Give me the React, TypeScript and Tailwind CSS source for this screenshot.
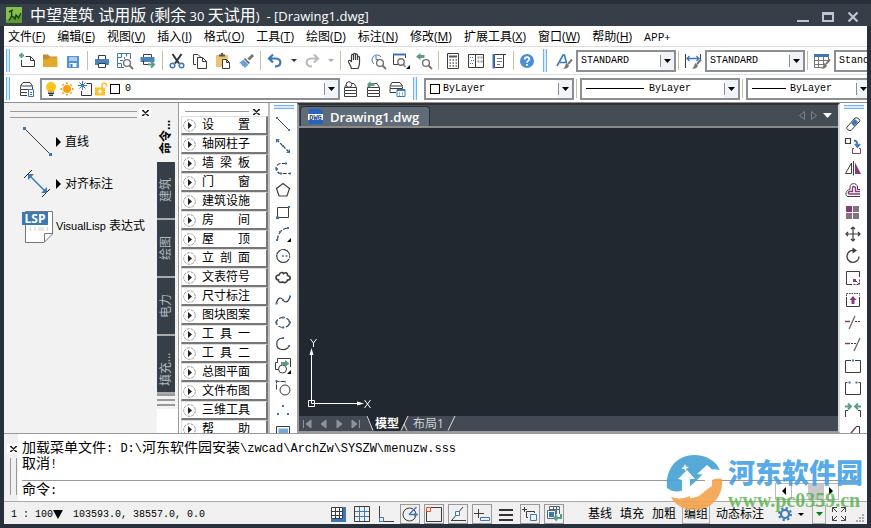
import type { ReactNode } from "react";

const DARK = "#3c3c3c";
const BLUE = "#3c78b4";
const GREEN = "#5a9c86";
const PLUM = "#87397d";

interface Tool {
  label: string;
  art: ReactNode;
}

const magnifier = (
  <g stroke="#77716f" strokeWidth="1.4">
    <circle cx="11" cy="11" r="3.4" fill="#fff" />
    <path d="M13.5 13.5 17 17" strokeWidth="1.8" />
  </g>
);

const brush = (
  <>
    <path d="M17 7.5 13 12" stroke="#777" strokeWidth="2" />
    <path d="M11.5 11 14 13.5C13 16.5 10.5 17 8 16.5 10.5 15.5 10 12.5 11.5 11Z" fill="#777" stroke="none" />
  </>
);

const layers = (
  <>
    <path d="M5 3.5H12L14.5 7.5H2.5Z" />
    <path d="M2.5 8V10.5H14.5V8M2.5 11V13.5H14.5V11M2.5 14V16.5H14.5V14" />
  </>
);

const fileTools: Tool[] = [
  {
    label: "New",
    art: (
      <>
        <path d="M1 3.5H6M3.5 1V6" stroke={GREEN} strokeWidth="2" />
        <path d="M7.5 4.5H12.5L16.5 8.5V14.5H3.5V8M12.5 4.5V8.5H16.5" />
      </>
    ),
  },
  {
    label: "Open",
    art: (
      <>
        <path d="M2 4V2.5H7L9 4.5H16V8H2Z" fill="#c08f33" stroke="none" />
        <path d="M2 15V7H7L9 5.5H16.5V15Z" fill="#e3a92f" stroke="none" />
      </>
    ),
  },
  {
    label: "Save",
    art: (
      <>
        <path d="M3 4H15V16H3Z" fill="#4f93d2" stroke="none" />
        <path d="M5 5H13V9H5Z" fill="#a9cdec" stroke="none" />
        <path d="M5.5 11H12.5V15H5.5Z" fill="#fff" stroke="none" />
        <path d="M6.5 12H8.5V15H6.5Z" fill={BLUE} stroke="none" />
      </>
    ),
  },
];

const printTools: Tool[] = [
  {
    label: "Print",
    art: (
      <>
        <path d="M5.5 7V3.5H12.5V7" />
        <path d="M2 7H16V13H2Z" fill="#4a84bd" stroke="none" />
        <path d="M5.5 11.5H12.5V15.5H5.5Z" fill="#fff" />
      </>
    ),
  },
  {
    label: "Print preview",
    art: (
      <>
        <path d="M1.5 1.5H14.5V7M1.5 1.5V15.5H8M5.5 1.5V5.5H1.5M10.5 1.5V4.5M4 8.5H7M8.5 5V7M1.5 11.5H5.5V15.5" stroke={BLUE} />
        {magnifier}
      </>
    ),
  },
  {
    label: "Plot",
    art: (
      <>
        <path d="M4.5 5V2.5H12.5V5" />
        <path d="M1.5 5H15.5V10H1.5Z" fill="#4a84bd" stroke="none" />
        <path d="M9 12.5H15M12 9.5 15 12.5 12 15.5" stroke={GREEN} strokeWidth="2" />
        <path d="M4.5 8.5V12.5H9" />
      </>
    ),
  },
];

const clipTools: Tool[] = [
  {
    label: "Cut",
    art: (
      <>
        <path d="M4.5 2 11 11.5M13.5 2 7 11.5" stroke="#333" strokeWidth="2" />
        <circle cx="4.5" cy="13.5" r="2.3" stroke={BLUE} strokeWidth="1.5" />
        <circle cx="13.5" cy="13.5" r="2.3" stroke={BLUE} strokeWidth="1.5" />
      </>
    ),
  },
  {
    label: "Copy",
    art: (
      <>
        <path d="M5 12.5H2.5V2.5H7L9.5 5" />
        <path d="M6.5 5.5H11.5L15.5 9.5V16.5H6.5ZM11.5 5.5V9.5H15.5" fill="#fff" />
      </>
    ),
  },
  {
    label: "Paste",
    art: (
      <>
        <path d="M2 3H14V15H2Z" fill="#ecc174" stroke="none" />
        <path d="M5 3.5H11M7 2H9" strokeWidth="2" stroke="#555" />
        <path d="M8.5 7.5H12.5L15.5 10.5V16.5H8.5ZM12.5 7.5V10.5H15.5" fill="#fff" />
      </>
    ),
  },
  {
    label: "Match properties",
    art: (
      <>
        <path d="M16 3 11.5 7.5" stroke="#777" strokeWidth="3" />
        <path d="M8 6 13 11 11.5 12 7 7Z" fill="#666" stroke="none" />
        <path d="M6.5 7.5 11.5 12.5 8 16 6.5 14 5.5 14.5 4 11.5 2 11Z" fill="#6aa3d6" stroke="none" />
      </>
    ),
  },
];

const zoomTools: Tool[] = [
  {
    label: "Pan",
    art: (
      <path
        d="M5.5 16.5C4.5 13 3 12 2.5 9.5 2.5 8 4.5 8 5.5 10V3.5C5.5 2 7.5 2 7.5 3.5V8 2.5C7.5 1 9.5 1 9.5 2.5V8 3C9.5 1.5 11.5 1.5 11.5 3.5V8 5C11.5 4 13.5 4 13.5 5.5V11C13.5 14 12.5 15 12 16.5Z"
        strokeWidth="1.2"
      />
    ),
  },
  {
    label: "Zoom real time",
    art: (
      <>
        <path d="M12 5A5 5 0 1 0 5 12M7 4V7.5H9.5" stroke={BLUE} />
        {magnifier}
      </>
    ),
  },
  {
    label: "Zoom window",
    art: (
      <>
        <path d="M6 12.5H1.5V2.5H13.5V6" />
        <path d="M1 2.5H14" stroke={BLUE} strokeWidth="2" />
        <g stroke="#77716f" strokeWidth="1.4">
          <circle cx="9" cy="10" r="3.2" fill="#fff" />
          <path d="M11.5 12.5 13.5 15" />
        </g>
        <path d="M18 13V17H14Z" fill="#000" stroke="none" />
      </>
    ),
  },
  {
    label: "Zoom previous",
    art: (
      <>
        <path d="M1 4.5 5.5 1V3H9.5V6H5.5V8Z" fill={GREEN} stroke="none" />
        {magnifier}
      </>
    ),
  },
];

const sheetTools: Tool[] = [
  {
    label: "Calculator",
    art: (
      <>
        <path d="M3.5 1.5H14.5V16.5H3.5Z" />
        <path d="M5 4.5H13" stroke="#555" strokeWidth="2" />
        <path d="M5.5 8H13M5.5 11H13M5.5 14H13" stroke="#666" strokeWidth="1.5" strokeDasharray="1.5 1.5" />
      </>
    ),
  },
  {
    label: "Design center",
    art: (
      <>
        <path d="M1.5 2.5H8.5V15.5H1.5ZM8.5 2.5H16.5V15.5H8.5Z" />
        <path d="M3 5.5H7M4 8.5H7M3 11.5H7" stroke={BLUE} strokeDasharray="1 1" />
        <path d="M10.5 5.5H12.5M13.5 5.5H15.5M10.5 9.5H12.5M13.5 9.5H15.5" stroke="#999" strokeWidth="2" />
      </>
    ),
  },
  {
    label: "Properties",
    art: (
      <>
        <path d="M4.5 2.5H16M13.5 3V15.5H4.5V2.5" />
        <path d="M3.5 2V16.5" stroke={BLUE} strokeWidth="2" />
        <path d="M7 6.5H12M7 9.5H12M7 12.5H10" stroke="#777" />
      </>
    ),
  },
];

const drawTools: Tool[] = [
  {
    label: "Line",
    art: (
      <>
        <path d="M3 3 15 15" />
        <path d="M2 2H4V4H2ZM14 14H16V16H14Z" fill={BLUE} stroke="none" />
      </>
    ),
  },
  {
    label: "Construction line",
    art: (
      <>
        <path d="M3 3 15 15" strokeDasharray="3 1.5" strokeWidth="1.2" />
        <path d="M2 2H6L2 6ZM16 16V12L12 16ZM8 8H10V10H8Z" fill={BLUE} stroke="none" />
      </>
    ),
  },
  {
    label: "Polyline",
    art: (
      <>
        <path d="M12 4.5H7A5 5 0 0 0 7 14.5H16" strokeDasharray="4 1.5" strokeWidth="1.2" />
        <path d="M11 3.5H13V5.5H11ZM2 9H4V11H2ZM15 13.5H17V15.5H15ZM6 13.5H8V15.5H6Z" fill={BLUE} stroke="none" />
      </>
    ),
  },
  { label: "Polygon", art: <path d="M9 2.5 15.5 7.5 13 15H5L2.5 7.5Z" strokeWidth="1.2" /> },
  {
    label: "Rectangle",
    art: (
      <>
        <path d="M3.5 4.5H14.5V14.5H3.5Z" />
        <path d="M2 13.5H5V16H2ZM14 3H16V5H14Z" fill={BLUE} stroke="none" />
      </>
    ),
  },
  {
    label: "Arc",
    art: (
      <>
        <path d="M14 3C7 4 4 8 3.5 15" strokeDasharray="5 1.5" strokeWidth="1.2" />
        <path d="M13 2H15V4H13ZM5 6H7V8H5ZM2 14H4V16H2Z" fill={BLUE} stroke="none" />
        <path d="M17 13V17H13Z" fill="#000" stroke="none" />
      </>
    ),
  },
  {
    label: "Circle",
    art: (
      <>
        <path d="M15 6A6.5 6.5 0 1 0 15 12" strokeWidth="1.2" />
        <path d="M15 6Q16.5 9 15 12" strokeDasharray="2 1" />
        <path d="M8 9H16" stroke={BLUE} strokeWidth="1.5" strokeDasharray="2 1.5" />
      </>
    ),
  },
  {
    label: "Revision cloud",
    art: (
      <path
        d="M5 6C6 3 9 3 9.5 4.5 12 3 14 4 13.5 6.5 17 7 17 11 13.5 11 13 14 10 14 8.5 13 6 14 4 13 4.5 11 1 10.5 1 6.5 5 6Z"
        strokeWidth="1.6"
      />
    ),
  },
  {
    label: "Spline",
    art: (
      <>
        <path d="M2.5 12C4 6 7 6 9 9S14 12 16 6" strokeWidth="1.2" />
        <path d="M1.5 11.5H3.5V13.5H1.5ZM8 8H10V10H8ZM15 4.5H17V6.5H15Z" fill={BLUE} stroke="none" />
      </>
    ),
  },
  {
    label: "Ellipse",
    art: (
      <>
        <ellipse cx="9" cy="9.5" rx="6.5" ry="5" strokeDasharray="6 1.5" strokeWidth="1.2" />
        <path d="M8 3.5H10V5.5H8ZM8 13.5H10V15.5H8ZM1 8.5H3V10.5H1ZM15 8.5H17V10.5H15Z" fill={BLUE} stroke="none" />
      </>
    ),
  },
  {
    label: "Elliptical arc",
    art: (
      <>
        <path d="M8 3C1 4 1 14 8 14.5 12 15 14 13 15 11" strokeWidth="1.2" />
        <path d="M8 2H10V4H8ZM14 10H16V12H14Z" fill={BLUE} stroke="none" />
      </>
    ),
  },
  {
    label: "Insert block",
    art: (
      <>
        <path d="M5 12.5H1.5V5.5H3.5V1.5H16.5V10" />
        <circle cx="8.5" cy="12" r="4" fill="#fff" />
        <path d="M7 5H11V3L15.5 6.5 11 10V8H7Z" fill={GREEN} stroke="none" />
        <path d="M17 13V17H13Z" fill="#000" stroke="none" />
      </>
    ),
  },
  {
    label: "Make block",
    art: (
      <>
        <path d="M2.5 10.5V2.5H11.5V4" strokeDasharray="5 1" />
        <path d="M1.5 1H3.5V3H1.5Z" fill={BLUE} stroke="none" />
        <circle cx="11" cy="11" r="5" fill="#fff" />
      </>
    ),
  },
  {
    label: "Point",
    art: <path d="M8 4H10V6H8ZM3 12H5V14H3ZM13 12H15V14H13Z" fill={BLUE} stroke="none" />,
  },
  {
    label: "Hatch",
    art: (
      <>
        <path d="M2.5 3.5H15.5V17H2.5Z" />
        <path d="M4.5 5.5H14V17H4.5Z" fill="#74a8da" stroke="none" />
      </>
    ),
  },
];

const modifyTools: Tool[] = [
  {
    label: "Erase",
    art: (
      <>
        <path d="M3 12 11 3Q13 2 15 4T15 7L7 15.5Q5 16 3.5 14.5T3 12Z" fill="#fff" />
        <path d="M7 8 11 4 14 7 10 11.5Z" fill={BLUE} stroke="none" />
      </>
    ),
  },
  {
    label: "Copy object",
    art: (
      <>
        <path d="M1.5 1.5H6.5V6.5H1.5Z" strokeWidth="1.2" />
        <path d="M10 3.5C12 3.5 13.5 5 13.5 9M11 7 13.5 10 16 7" stroke={BLUE} strokeWidth="1.8" />
        <path d="M10 11.5H8.5V16.5H16.5V11.5H15" stroke={PLUM} />
      </>
    ),
  },
  {
    label: "Mirror",
    art: (
      <>
        <path d="M7.5 4V14.5H1.5ZM9.5 2V16.5" />
        <path d="M11 3.5V15H17Z" fill={PLUM} stroke="none" />
      </>
    ),
  },
  {
    label: "Offset",
    art: (
      <>
        <path d="M16 8.5H13.5V6C13 1.5 6 1.5 6 6V8.5C1 9 1 15.5 4 15.5H16" />
        <path d="M16 10.5H11.5V7C11 5 8.5 5 8.5 7V10.5H5.5C4 11 4 13 5.5 13H16" stroke={PLUM} strokeWidth="1.4" />
      </>
    ),
  },
  {
    label: "Array",
    art: (
      <>
        <path d="M2 3H8V9H2Z" fill={PLUM} stroke="none" />
        <path d="M9 3H15V9H9ZM2 10H8V16H2ZM9 10H15V16H9Z" fill="#84707f" stroke="none" />
      </>
    ),
  },
  {
    label: "Move",
    art: <path d="M9 2V16M2 9H16M7 4 9 2 11 4M7 14 9 16 11 14M4 7 2 9 4 11M14 7 16 9 14 11" strokeWidth="1.2" />,
  },
  {
    label: "Rotate",
    art: (
      <>
        <path d="M10 3.5A6 6 0 1 0 15 9.5" strokeWidth="1.3" />
        <path d="M8.5 0.5 13 3.5 8.5 6.5Z" fill={DARK} stroke="none" />
      </>
    ),
  },
  {
    label: "Scale",
    art: (
      <>
        <path d="M15.5 8V2.5H2.5V15.5H8" />
        <path d="M9 10H12V13H9Z" fill={PLUM} stroke="none" />
        <path d="M9.5 15.5H15.5V10M12 12 15 15" strokeDasharray="2 1" />
      </>
    ),
  },
  {
    label: "Stretch",
    art: (
      <>
        <path d="M2.5 6V15.5H15.5V6" />
        <path d="M2.5 5V2.5H15.5V5" strokeDasharray="1.5 1" />
        <path d="M9 5 12.5 9H10.5V13H7.5V9H5.5Z" fill={PLUM} stroke="none" />
      </>
    ),
  },
  {
    label: "Trim",
    art: (
      <>
        <path d="M11 3 5 16" stroke="#666" strokeWidth="1.3" />
        <path d="M1 8.5H6" stroke={PLUM} strokeWidth="1.5" />
        <path d="M11 8.5H17" strokeDasharray="2 1" />
      </>
    ),
  },
  {
    label: "Extend",
    art: (
      <>
        <path d="M16 3 10 16" stroke="#666" strokeWidth="1.3" />
        <path d="M1 8.5H6" stroke={PLUM} strokeWidth="1.5" />
        <path d="M7 8.5H12" strokeDasharray="2 1" />
      </>
    ),
  },
  {
    label: "Break at point",
    art: (
      <>
        <path d="M7 3.5H1.5V15.5H16.5V3.5H11" />
        <path d="M8 2.5H10V4.5H8Z" fill={BLUE} stroke="none" />
      </>
    ),
  },
  {
    label: "Break",
    art: (
      <>
        <path d="M3.5 3.5H1.5V15.5H16.5V3.5H14.5" />
        <path d="M4.5 2.5H6.5V4.5H4.5ZM11.5 2.5H13.5V4.5H11.5Z" fill={BLUE} stroke="none" />
      </>
    ),
  },
  {
    label: "Join",
    art: (
      <>
        <path d="M1 5.5H6M4 2.5 7 5.5 4 8.5M17 5.5H12M14 2.5 11 5.5 14 8.5" stroke={GREEN} strokeWidth="1.8" />
        <path d="M1.5 16V9.5H4M16.5 16V9.5H14" />
      </>
    ),
  },
  {
    label: "Chamfer",
    art: (
      <>
        <path d="M3 15 12 4" stroke={PLUM} strokeWidth="1.5" />
        <path d="M12 3.5H15.5V17" />
      </>
    ),
  },
];

const statusToggles: (Tool & { on?: boolean })[] = [
  {
    label: "Snap",
    art: (
      <>
        <path d="M15.5 2V15.5H2" stroke={BLUE} strokeWidth="3" />
        <path d="M2.5 2.5H13.5V13.5H2.5ZM6.5 2V14M10.5 2V14M2 6.5H14M2 10.5H14" fill="#fff" />
      </>
    ),
  },
  {
    label: "Grid",
    art: (
      <>
        <path d="M6.5 2V16M11.5 2V16M2 6.5H16M2 11.5H16" stroke={BLUE} />
        <path d="M1.5 1.5H16.5V16.5H1.5Z" />
      </>
    ),
  },
  {
    label: "Ortho",
    art: (
      <>
        <path d="M2.5 1V16.5H17" />
        <path d="M2.5 12.5H6.5V16.5H2.5Z" stroke={BLUE} />
      </>
    ),
  },
  {
    label: "Polar",
    on: true,
    art: (
      <>
        <circle cx="8.5" cy="9.5" r="6.5" />
        <path d="M8 9.5H17M8 9.5 15.5 2M14 8V12" stroke={BLUE} strokeWidth="1.3" />
      </>
    ),
  },
  {
    label: "Object snap",
    on: true,
    art: (
      <>
        <path d="M6 2.5H16.5V16.5H1.5V6" />
        <path d="M1.5 2.5H5.5V6.5H1.5Z" stroke="#d9532c" />
      </>
    ),
  },
  {
    label: "Object tracking",
    on: true,
    art: (
      <>
        <path d="M2 15.5H17M3 15 14 2" />
        <path d="M6.5 6.5H10.5V10.5H6.5Z" stroke={BLUE} fill="#fff" />
      </>
    ),
  },
  {
    label: "Dynamic input",
    on: true,
    art: (
      <>
        <path d="M1 8.5H11M5.5 4V13" />
        <path d="M7.5 12.5H16.5V15.5H7.5Z" stroke={BLUE} />
      </>
    ),
  },
  { label: "Line weight", art: <path d="M2 5H16M2 10H16M2 15H16" strokeWidth="2" stroke="#333" /> },
  {
    label: "Cycle selection",
    on: true,
    art: (
      <>
        <path d="M1 4.5H6M3.5 2V7M7 12.5H5.5V6.5H13.5V8" />
        <path d="M9.5 9.5H15.5V15.5H9.5Z" stroke={BLUE} />
      </>
    ),
  },
  {
    label: "Quick properties",
    on: true,
    art: (
      <>
        <path d="M4.5 5V1.5H14.5V9M4.5 4.5H14M8.5 2V5M11.5 2V9M2.5 5.5H10.5V13.5H2.5Z" stroke="#567" />
        <path d="M4 7H9V12H4Z" fill={BLUE} stroke="none" />
        <path d="M16 9V13H10M12 10.5 9.5 13 12 15.5" stroke={GREEN} strokeWidth="2" />
      </>
    ),
  },
];

const menus: [string, string][] = [
  ["文件", "F"],
  ["编辑", "E"],
  ["视图", "V"],
  ["插入", "I"],
  ["格式", "O"],
  ["工具", "T"],
  ["绘图", "D"],
  ["标注", "N"],
  ["修改", "M"],
  ["扩展工具", "X"],
  ["窗口", "W"],
  ["帮助", "H"],
];

// Short names are spread over a four-character column.
const archMenu: string[][] = [
  ["设", "置"],
  ["轴网柱子"],
  ["墙", "梁", "板"],
  ["门", "窗"],
  ["建筑设施"],
  ["房", "间"],
  ["屋", "顶"],
  ["立", "剖", "面"],
  ["文表符号"],
  ["尺寸标注"],
  ["图块图案"],
  ["工", "具", "一"],
  ["工", "具", "二"],
  ["总图平面"],
  ["文件布图"],
  ["三维工具"],
  ["帮", "助"],
];

function Glyph({ children }: { children: ReactNode }) {
  return (
    <svg viewBox="0 0 18 18" className="size-[18px] shrink-0" fill="none" stroke={DARK} aria-hidden="true">
      {children}
    </svg>
  );
}

function ToolButton({ label, art }: Tool) {
  return (
    <button type="button" aria-label={label} className="flex h-[22px] w-[23px] shrink-0 items-center justify-center pr-px">
      <Glyph>{art}</Glyph>
    </button>
  );
}

function Tools({ items }: { items: Tool[] }) {
  return items.map((tool) => <ToolButton key={tool.label} {...tool} />);
}

function Divider() {
  return <span className="mr-[3px] ml-0.5 h-[19px] w-px shrink-0 bg-[#c5c1a8]" />;
}

function Grip() {
  return <span className="mr-1.5 ml-0.5 h-[23px] w-1 shrink-0 border-x border-[#6db3f8] bg-[#d7ebfd]" />;
}

function DropArrow({ label, color }: { label: string; color: string }) {
  return (
    <button type="button" aria-label={label} className="grid h-[22px] w-3.5 shrink-0 place-items-center">
      <svg viewBox="0 0 6 3" className="h-[3px] w-1.5" fill={color}>
        <path d="M0 0H6L3 3Z" />
      </svg>
    </button>
  );
}

interface ComboProps {
  label: string;
  value: string;
  width: string;
  pad?: string;
  children?: ReactNode;
}

function Combo({ label, value, width, pad = "pl-[3px]", children }: ComboProps) {
  return (
    <div className={`relative h-[22px] shrink-0 ${width}`}>
      <select
        aria-label={label}
        defaultValue={value}
        className={`block size-full appearance-none border-2 border-[#8b8f93] bg-white font-['Liberation_Mono',monospace] text-[10px] text-black outline-none ${pad}`}
      >
        <option>{value}</option>
      </select>
      <span className="pointer-events-none absolute inset-y-0 left-1.5 flex items-center gap-0.5">{children}</span>
      <span className="pointer-events-none absolute inset-y-0.5 right-0.5 grid w-3.5 place-items-center bg-[#f0f4f9]">
        <svg viewBox="0 0 7 4" className="h-1 w-[7px]">
          <path d="M0 0H7L3.5 4Z" />
        </svg>
        <span className="absolute top-[3px] left-0 h-3 w-px bg-[#8b8f93]" />
      </span>
    </div>
  );
}

function CloseMark({ label }: { label: string }) {
  return (
    <button type="button" aria-label={label} className="grid h-2.5 w-3 place-items-center bg-white">
      <svg viewBox="0 0 7 6" className="h-1.5 w-[7px]" stroke="#222" strokeWidth="1.5">
        <path d="M1 .5 6 5.5M6 .5 1 5.5M0 .5H2M5 .5H7M0 5.5H2M5 5.5H7" />
      </svg>
    </button>
  );
}

function TitleBar() {
  return (
    <header className="flex h-[26px] shrink-0 items-center justify-between border-t-4 border-[#27303a] bg-[#363e47] pr-3 pl-1.5 text-white">
      <div className="flex items-center gap-2">
        <svg viewBox="0 0 16 16" className="size-4" aria-hidden="true">
          <path d="M0 0H16V16H0Z" fill="#5c9c2f" />
          <path d="M0 0H16V8Q6 8 0 14Z" fill="#86c04c" />
          <path d="M3 13.5Q6.5 9 5.5 4.5M3 5 7 3M6 9 9 12 10 8 12.5 11 15 6" fill="none" stroke="#173d14" strokeWidth="1.4" />
        </svg>
        <h1 className="flex items-baseline font-['Open_Sans','Noto_Sans_CJK_SC',sans-serif] text-[13px] leading-[22px] whitespace-pre">
          <span className="text-base leading-[22px]">中望建筑 试用版 </span>
          <span>(</span>
          <span className="text-base leading-[22px]">剩余</span>
          <span> 30 </span>
          <span className="text-base leading-[22px]">天试用</span>
          <span>)  - [Drawing1.dwg]</span>
        </h1>
      </div>
      <div className="mt-1 flex gap-[13px]">
        <button type="button" aria-label="Minimize" className="flex h-3.5 w-3 items-end">
          <span className="mb-0.5 h-0.5 w-full bg-[#b9c8d4]" />
        </button>
        <button type="button" aria-label="Maximize" className="grid h-3.5 w-3 place-items-center">
          <span className="h-2.5 w-full border-2 border-t-[3px] border-[#b9c8d4]" />
        </button>
        <button type="button" aria-label="Close" className="grid h-3.5 w-3 place-items-center">
          <svg viewBox="0 0 10 10" className="size-2.5" stroke="#b9c8d4" strokeWidth="2.2">
            <path d="M.5.5 9.5 9.5M9.5.5.5 9.5" />
          </svg>
        </button>
      </div>
    </header>
  );
}

function MenuBar() {
  return (
    <nav className="flex h-[21px] shrink-0 items-center gap-3 overflow-hidden border-b border-[#dcdcdc] bg-white pt-0.5 pl-1 font-['Open_Sans','Noto_Sans_CJK_SC',sans-serif] text-xs whitespace-nowrap text-black">
      {menus.map(([name, key]) => (
        <button type="button" key={name} className="leading-[18px]">
          {name}(<u>{key}</u>)
        </button>
      ))}
      <button type="button" className="text-[11px] leading-[18px]">
        APP+
      </button>
    </nav>
  );
}

function MainToolbar() {
  return (
    <div className="flex h-7 shrink-0 items-center overflow-hidden border-b border-[#dcdcdc] bg-white">
      <Grip />
      <Tools items={fileTools} />
      <Divider />
      <Tools items={printTools} />
      <Divider />
      <Tools items={clipTools} />
      <Divider />
      <ToolButton
        label="Undo"
        art={<path d="M7 2.5 3 6.5 7 10.5M3.5 6.5H10C16 6.5 16 14.5 9 14.5" stroke={BLUE} strokeWidth="2.2" />}
      />
      <DropArrow label="Undo list" color="#333" />
      <ToolButton
        label="Redo"
        art={<path d="M11 2.5 15 6.5 11 10.5M14.5 6.5H8C2 6.5 2 14.5 9 14.5" stroke="#bcbcbc" strokeWidth="2.2" />}
      />
      <DropArrow label="Redo list" color="#aaa" />
      <Divider />
      <Tools items={zoomTools} />
      <Divider />
      <Tools items={sheetTools} />
      <Divider />
      <ToolButton
        label="Help"
        art={
          <>
            <circle cx="8" cy="9" r="7" fill="#4a8fd0" stroke="none" />
            <path d="M5.8 7.5C5.8 4.5 10.5 4.5 10.3 7.2 10.2 9 8 8.8 8 10.8M8 12V13.8" stroke="#fff" strokeWidth="1.8" />
          </>
        }
      />
      <span className="w-px shrink-0" />
      <Grip />
      <ToolButton
        label="Text style"
        art={
          <>
            <path d="M2 14 8 3H9.5L11.5 11M5 10.5H11" stroke={BLUE} strokeWidth="1.6" />
            {brush}
          </>
        }
      />
      <Combo label="Text style" value="STANDARD" width="w-[100px]" />
      <Divider />
      <ToolButton
        label="Dimension style"
        art={
          <>
            <path d="M1.5 2V16M16.5 2V8" />
            <path d="M3 6.5H15M5.5 4 3 6.5 5.5 9M12.5 4 15 6.5 12.5 9" stroke={BLUE} strokeWidth="1.3" />
            {brush}
          </>
        }
      />
      <Combo label="Dimension style" value="STANDARD" width="w-[100px]" />
      <Divider />
      <ToolButton
        label="Table style"
        art={
          <>
            <path d="M1.5 5V15.5H9M1.5 8.5H15M1.5 12.5H11M5.5 5V15.5M10.5 5V12M15.5 5V8" stroke="#777" />
            <path d="M1 3.5H16" stroke={BLUE} strokeWidth="3" />
            {brush}
          </>
        }
      />
      <Combo label="Table style" value="Standard" width="w-[100px]" />
    </div>
  );
}

function LayerToolbar() {
  return (
    <div className="flex h-7 shrink-0 items-center overflow-hidden border-b border-[#8f8f8f] bg-white">
      <Grip />
      <ToolButton
        label="Layer manager"
        art={
          <>
            <path d="M5 2.5H12L14.5 6H2.5ZM2.5 6.5V9.5H14.5V6.5M2.5 10V12.5H9M2.5 13V15.5H9" />
            <path d="M10.5 9.5H15.5V16.5H10.5Z" stroke={BLUE} fill="#fff" />
            <path d="M12 12.5H14M12 14.5H14" stroke={BLUE} />
          </>
        }
      />
      <span className="w-px shrink-0" />
      <Combo label="Layer" value="0" width="w-[300px]" pad="pl-[83px]">
        <svg viewBox="0 0 10 14" className="h-3.5 w-2.5">
          <circle cx="5" cy="5" r="5" fill="#fcc419" />
          <path d="M2 8H8V10H2Z" fill="#e9b422" />
          <path d="M2 10.5H8V12H2ZM3 12.5H7V14H3Z" fill="#333" />
        </svg>
        <svg viewBox="0 0 18 18" className="size-[18px]">
          <circle cx="9" cy="9" r="4" fill="#ff9e0d" />
          <g stroke="#ff9e0d" strokeWidth="2">
            <path d="M9 2.500V4M9 14V15.5M2.5 9H4M14 9H15.5M4.500 4.500 5.500 5.500M12.500 12.500 13.500 13.500M4.500 13.500 5.500 12.500M12.500 5.500 13.500 4.500" />
          </g>
        </svg>
        <svg viewBox="0 0 15 16" className="h-4 w-[15px]" fill="none">
          <path d="M8.5 2.5H13.5V14.5H3.5V10" stroke="#333" />
          <path d="M4.5 0V9M0 4.5H9M1.5 1.5 7.5 7.5M7.5 1.5 1.5 7.5" stroke={BLUE} />
        </svg>
        <svg viewBox="0 0 13 14" className="h-3.5 w-[13px]" fill="none">
          <path d="M7 6V3C7 .5 11.5.5 11.5 3V4.5" stroke="#fbc02d" strokeWidth="1.5" />
          <path d="M0 5.5H10V13.5H0Z" fill="#fbc02d" />
          <path d="M5 7.5V11.5M3 9.5H7" stroke="#fff" strokeWidth="1.5" />
        </svg>
        <span className="size-2.5 border border-black bg-white" />
      </Combo>
      <ToolButton
        label="Make object layer current"
        art={
          <>
            {layers}
            <circle cx="7" cy="4.5" r="2.8" fill="#fff" />
          </>
        }
      />
      <ToolButton
        label="Layer previous"
        art={
          <>
            {layers}
            <path d="M2 4.5 5.5 1V3H9.5V6H5.5V8Z" fill={GREEN} stroke="none" />
          </>
        }
      />
      <ToolButton
        label="Layer state"
        art={
          <>
            <path d="M4 2.5H12L14.5 6H2ZM2 6.5V8.5H14.5V6.5M2 9V12.5H8" />
            <path d="M9 9.5H17V16.5H9Z" stroke={BLUE} fill="#fff" />
            <path d="M9 10.5H17M11 13H12M14 13H15M11 15H12M14 15H15" stroke={BLUE} />
          </>
        }
      />
      <span className="w-0.5 shrink-0" />
      <Grip />
      <span className="w-px shrink-0" />
      <Combo label="Color" value="ByLayer" width="w-[150px]" pad="pl-[17px]">
        <span className="size-2.5 border border-black" />
      </Combo>
      <Divider />
      <Combo label="Linetype" value="ByLayer" width="w-[160px]" pad="pl-[67px]">
        <span className="h-px w-[58px] bg-black" />
      </Combo>
      <Divider />
      <Combo label="Lineweight" value="ByLayer" width="w-[126px]" pad="pl-[42px]">
        <span className="h-px w-[34px] bg-black" />
      </Combo>
    </div>
  );
}

interface PaletteRowProps {
  latin?: string;
  text: string;
  arrow?: boolean;
  children: ReactNode;
}

function PaletteRow({ latin, text, arrow, children }: PaletteRowProps) {
  return (
    <button type="button" className="flex h-[42px] items-center whitespace-nowrap">
      <svg viewBox="0 0 34 34" className="size-[34px]" fill="none" stroke={DARK} aria-hidden="true">
        {children}
      </svg>
      {arrow && (
        <svg viewBox="0 0 5 10" className="mr-1 h-2.5 w-[5px]">
          <path d="M0 0 5 5 0 10Z" />
        </svg>
      )}
      <span className="flex items-baseline gap-[3px]">
        {latin && <span className="font-['Liberation_Sans',sans-serif] text-[11px]">{latin}</span>}
        {text}
      </span>
    </button>
  );
}

function ToolPalette() {
  return (
    <section className="flex w-[175px] shrink-0 overflow-hidden border-r border-[#999] bg-[#f2f2f2] font-['Open_Sans','Noto_Sans_CJK_SC',sans-serif] text-xs text-black">
      <div className="min-w-0 flex-1">
        <div className="mt-1 flex items-center justify-between pr-1.5 pl-1.5">
          <span className="mt-1 h-[7px] w-[127px] border-y border-[#999]" />
          <CloseMark label="Close palette" />
        </div>
        <div className="mt-[3px] flex flex-col pl-[18px]">
          <PaletteRow text="直线" arrow>
            <path d="M3 4 29 30" />
            <path d="M1 2H4V5H1ZM27 28H30V31H27Z" fill={BLUE} stroke="none" />
          </PaletteRow>
          <PaletteRow text="对齐标注" arrow>
            <path d="M2 11 10 3M20 30 28 22" stroke="#222" />
            <path d="M8 9 23 24" stroke={BLUE} strokeWidth="1.5" />
            <path d="M6 7H12L6 13ZM25 26V20L19 26Z" fill={BLUE} stroke="none" />
          </PaletteRow>
          <PaletteRow latin="VisualLisp" text="表达式">
            <path d="M3.5 2.5H30.5V25L22 33.5H3.5Z" fill="#fff" stroke="#777" />
            <path d="M30 24.5H22.5V33" stroke="#777" />
            <path d="M0 3H26V16H0Z" fill={BLUE} stroke="none" />
            <text x="13" y="14" textAnchor="middle" fill="#fff" stroke="none" fontSize="12" fontWeight="700" fontFamily="Open Sans">
              LSP
            </text>
            <path d="M9 18Q7 20 9 22M25 18Q27 20 25 22M12 19H14M12 21H14M16 19H22M16 21H22" stroke="#ccc" />
          </PaletteRow>
        </div>
      </div>
      <div className="flex w-[21px] flex-col">
        <button
          type="button"
          className="flex h-[59px] w-[18px] rotate-180 items-center justify-start pt-2 leading-[18px] font-bold [text-orientation:sideways] [writing-mode:vertical-rl]"
        >
          命令...
        </button>
        {["建筑", "绘图", "电力", "填充..."].map((tab) => (
          <button
            type="button"
            key={tab}
            className="flex h-[58px] w-[18px] rotate-180 items-center justify-start border-t-2 border-[#aaa] bg-[#363e47] pt-4 leading-[18px] whitespace-nowrap text-[#b5babf] [text-orientation:sideways] [writing-mode:vertical-rl] last-of-type:pt-1.5"
          >
            {tab}
          </button>
        ))}
        <span className="h-[15px] w-[18px] bg-[repeating-linear-gradient(#999_0_2px,#f2f2f2_2px_5px)]" />
        <span className="w-full flex-1 bg-white" />
      </div>
    </section>
  );
}

function ArchMenu() {
  return (
    <section className="flex w-[91px] shrink-0 flex-col overflow-hidden border-r-2 border-[#bdbdbd] bg-white pl-0.5 font-['Open_Sans','Noto_Sans_CJK_SC',sans-serif] text-xs text-black">
      <div className="flex h-[13px] shrink-0 items-center justify-between pt-1 pr-1.5 pl-1">
        <span className="h-px w-16 bg-[#999]" />
        <CloseMark label="Close menu" />
      </div>
      {archMenu.map((parts) => (
        <button
          type="button"
          key={parts.join("")}
          className="flex h-[19px] shrink-0 items-center gap-1.5 border border-r-2 border-b-2 border-[#dedede] border-r-[#777] border-b-[#777] pl-px"
        >
          <svg viewBox="0 0 13 13" className="size-[13px]" fill="none">
            <circle cx="6.5" cy="6.5" r="5.8" stroke="#999" strokeDasharray="3 1" />
            <path d="M5 3 9 6.5 5 10Z" fill="#222" />
          </svg>
          <span className="flex w-12 justify-between leading-4">
            {parts.map((part) => (
              <span key={part}>{part}</span>
            ))}
          </span>
        </button>
      ))}
    </section>
  );
}

function SideToolbar({ items }: { items: Tool[] }) {
  return (
    <div className="flex w-[27px] shrink-0 flex-col items-center overflow-hidden bg-white">
      <span className="mt-0.5 mb-1 h-1 w-5 shrink-0 border-y border-[#6db3f8] bg-[#d7ebfd]" />
      <Tools items={items} />
    </div>
  );
}

function DrawingArea() {
  return (
    <main className="flex min-w-0 flex-1 flex-col border-2 border-[#9a9a98] border-t-[#333] border-r-[#dcdcdc] bg-[#212830]">
      <div className="flex h-[23px] shrink-0 items-end justify-between border-b-2 border-[#8b8a86] bg-[#444c54]">
        <button
          type="button"
          className="ml-px flex h-5 items-center gap-[7px] rounded-t-sm border-x border-t border-[#2a3037] bg-[#5f6c77] pr-2.5 pl-[7px] font-['Open_Sans',sans-serif] text-[13px] leading-5 font-semibold text-white"
        >
          <svg viewBox="0 0 15 15" className="size-[15px]" aria-hidden="true">
            <path d="M1 0H12L15 3V15H1Z" fill="#2563c0" />
            <path d="M0 5H15V11H0Z" fill="#fff" />
            <text x="7.5" y="10.5" textAnchor="middle" fontSize="7" fontWeight="700" fontFamily="Liberation Mono" fill="#173f82">
              DWG
            </text>
          </svg>
          Drawing1.dwg
        </button>
        <div className="mb-1.5 flex items-center gap-1.5 pr-1.5">
          <button type="button" aria-label="Previous drawing">
            <svg viewBox="0 0 6 9" className="block h-[9px] w-1.5" fill="none" stroke="#7b828a">
              <path d="M5.5.5V8.5L.5 4.5Z" />
            </svg>
          </button>
          <button type="button" aria-label="Next drawing">
            <svg viewBox="0 0 6 9" className="block h-[9px] w-1.5" fill="none" stroke="#7b828a">
              <path d="M.5.5V8.5L5.5 4.5Z" />
            </svg>
          </button>
          <button type="button" aria-label="Drawing list">
            <svg viewBox="0 0 9 5" className="block h-[5px] w-[9px]" fill="#fff">
              <path d="M0 0H9L4.5 5Z" />
            </svg>
          </button>
        </div>
      </div>
      <div className="flex min-h-0 flex-1 items-end pb-2 pl-2">
        <svg viewBox="0 0 68 70" className="h-[70px] w-[68px]" fill="none" stroke="#fff" aria-label="UCS">
          <path d="M4.5 14V65.5H53M1.5 62.5H7.5V68.5H1.5Z" />
          <path d="M4.5 10 6.5 17H2.5ZM57 65.5 50 63.5V67.5Z" fill="#fff" stroke="none" />
          <path d="M3.5 1 6.5 5 9.5 1M6.5 5V9M57.5 62 63.5 70M63.5 62 57.5 70" />
        </svg>
      </div>
      <div className="flex h-[15px] shrink-0 items-center bg-[#444a53]">
        <div className="flex items-center gap-1.5 pr-1 pl-1">
          {["M.5 1V9M8 1V9L3 5Z", "M7 1V9L2 5Z", "M2 1V9L7 5Z", "M1 1V9L6 5ZM8.5 1V9"].map((d) => (
            <button type="button" key={d} aria-label="Scroll layout tabs">
              <svg viewBox="0 0 10 10" className="block size-2.5" fill="#8d949c" stroke="#8d949c">
                <path d={d} />
              </svg>
            </button>
          ))}
        </div>
        <div className="flex h-full items-center font-['Open_Sans','Noto_Sans_CJK_SC',sans-serif] text-xs leading-[15px] text-[#ced3d8]">
          <svg viewBox="0 0 10 15" className="h-[15px] w-2.5" stroke="#ddd" fill="#212830">
            <path d="M1 0 8 14.5H11V0Z" stroke="none" />
            <path d="M2 0 8 14.5" />
          </svg>
          <button type="button" className="h-full bg-[#212830] font-bold text-white">
            模型
          </button>
          <svg viewBox="0 0 14 15" className="h-[15px] w-3.5" stroke="#ddd">
            <path d="M0 0H9L2 14.5H0Z" fill="#212830" stroke="none" />
            <path d="M9 0 2 14.5M5 8 8 14.5" />
          </svg>
          <button type="button" className="h-full">
            布局1
          </button>
          <svg viewBox="0 0 12 15" className="h-[15px] w-3" stroke="#ddd">
            <path d="M11 0 4 14.5" />
          </svg>
        </div>
      </div>
    </main>
  );
}

function CommandPanel() {
  return (
    <section className="flex h-[69px] shrink-0 border-y border-t-[#999] border-b-[#aaa] bg-white">
      <div className="flex w-3.5 shrink-0 flex-col items-center gap-1 bg-[#f0f0f0] pt-2.5 pb-1.5 pl-1">
        <CloseMark label="Close command line" />
        <span className="w-[7px] flex-1 border-x border-[#999]" />
      </div>
      <div className="flex min-w-0 flex-1 flex-col pt-[7px] pr-2 pl-1 font-['Liberation_Mono','Noto_Sans_CJK_SC',monospace] text-xs text-black">
        <div className="h-10 shrink-0 overflow-hidden border-b border-[#999] leading-[15px] whitespace-pre">
          <p>
            <span className="text-sm leading-[15px]">加载菜单文件</span>
            {": D:\\"}
            <span className="text-sm leading-[15px]">河东软件园安装</span>
            {"\\zwcad\\ArchZw\\SYSZW\\menuzw.sss"}
          </p>
          <p>
            <span className="text-sm leading-[15px]">取消</span>!
          </p>
        </div>
        <div className="flex h-5 items-center">
          <label htmlFor="command" className="leading-[15px]">
            <span className="text-sm leading-[15px]">命令</span>:
          </label>
          <input id="command" type="text" className="min-w-0 flex-1 bg-transparent px-1 outline-none" />
          <div className="mr-5 flex h-[17px] w-16 border border-[#bbb] bg-white">
            <button type="button" aria-label="Scroll left" className="grid w-4 place-items-center border-r border-[#bbb]">
              <svg viewBox="0 0 4 8" className="h-2 w-1">
                <path d="M4 0V8L0 4Z" />
              </svg>
            </button>
            <span className="ml-4 w-4 bg-[#c9c9cd]" />
            <button type="button" aria-label="Scroll right" className="grid flex-1 place-items-center">
              <svg viewBox="0 0 4 8" className="h-2 w-1">
                <path d="M0 0V8L4 4Z" />
              </svg>
            </button>
          </div>
        </div>
      </div>
    </section>
  );
}

function StatusBar() {
  return (
    <footer className="flex h-[22px] shrink-0 items-center justify-between bg-[#f0f0f0] pt-0.5 pl-[7px] font-['Open_Sans','Noto_Sans_CJK_SC',sans-serif] text-xs text-black">
      <div className="flex items-center pt-0.5 font-['Liberation_Mono',monospace] text-[10px] whitespace-pre">
        <button type="button" className="flex w-[62px] items-center">
          1 : 100
          <svg viewBox="0 0 10 9" className="h-[9px] w-2.5">
            <path d="M0 0H10L5 9Z" />
          </svg>
        </button>
        <output>103593.0, 38557.0, 0.0</output>
      </div>
      <div className="flex items-center">
        <div className="mr-6 flex gap-1">
          {statusToggles.map(({ label, art, on }) => (
            <button
              type="button"
              key={label}
              aria-label={label}
              aria-pressed={Boolean(on)}
              className={`grid size-5 place-items-center border ${on ? "border-[#999]" : "border-transparent"}`}
            >
              <Glyph>{art}</Glyph>
            </button>
          ))}
        </div>
        <div className="flex items-center gap-2 whitespace-nowrap">
          <button type="button">基线</button>
          <button type="button">填充</button>
          <button type="button">加粗</button>
          <button type="button" className="-mx-0.5 h-[19px] border border-[#aaa] px-px leading-4">
            编组
          </button>
          <button type="button">动态标注</button>
        </div>
        <button type="button" aria-label="Settings" className="ml-3 grid size-[18px] place-items-center">
          <svg viewBox="0 0 14 14" className="size-3.5" fill="none" stroke={BLUE}>
            <circle cx="7" cy="7" r="4" strokeWidth="2.2" />
            <circle cx="7" cy="7" r="6" strokeWidth="2" strokeDasharray="2.3 2.41" />
          </svg>
        </button>
        <DropArrow label="Settings list" color="#000" />
        <button type="button" aria-label="Annotation list" className="mx-1 grid h-[19px] w-3.5 place-items-center border border-[#aaa]">
          <svg viewBox="0 0 7 4" className="h-1 w-[7px]" fill="#0a7d12">
            <path d="M0 0H7L3.5 4Z" />
          </svg>
        </button>
        <button type="button" aria-label="Full screen" className="mx-0.5">
          <svg viewBox="0 0 14 14" className="size-3.5" fill="none" stroke="#444">
            <path d="M.5 5V.5H5M.5.5 5 5M9 .5H13.5V5M13.5.5 9 5M.5 9V13.5H5M.5 13.5 5 9M9 13.5H13.5V9M13.5 13.5 9 9" />
          </svg>
        </button>
        <svg viewBox="0 0 9 9" className="mr-0.5 mb-0.5 ml-2 size-[9px] self-end" fill="#aaa">
          <path d="M6 0H8V2H6ZM3 3H5V5H3ZM6 3H8V5H6ZM0 6H2V8H0ZM3 6H5V8H3ZM6 6H8V8H6Z" />
        </svg>
      </div>
    </footer>
  );
}

function Watermark() {
  return (
    <div className="pointer-events-none absolute right-2 bottom-3 flex items-end gap-1">
      <svg viewBox="0 0 58 58" className="size-[58px]" aria-hidden="true">
        <path d="M1 34C-1 14 12 1 28 1 40 1 50 7 54 16 44 13 38 18 30 27 20 37 10 41 1 34Z" fill="#4ea4d6" opacity=".95" />
        <path d="M5 43C17 47 28 42 37 33 44 26 50 23 56 25 58 41 46 56 29 56 18 56 9 51 5 43Z" fill="#f4a24c" opacity=".9" />
        <path
          d="M12 25 21 16 29 25H24V38H16V26ZM31 20 41 11 51 20H46V32L39 37V21ZM24 38C33 38 36 31 39 28V37C34 42 30 44 24 44Z"
          fill="#fff"
          opacity=".95"
        />
        <path d="M19 10 20 12.5 23 13 20.5 14.5 20 17 18 15 15.5 15 17.5 13Z" fill="#fff" />
      </svg>
      <div className="flex flex-col">
        <strong className="font-['Noto_Sans_CJK_SC',sans-serif] text-[27px] leading-8 font-black text-[#3f9fe6]/90">河东软件园</strong>
        <span className="font-['Liberation_Serif',serif] text-xl leading-6 font-bold text-[#54b045]/80">www.pc0359.cn</span>
      </div>
    </div>
  );
}

export default function App() {
  return (
    <div className="relative flex h-screen flex-col overflow-hidden border-b-4 border-[#27303a] bg-[#27303a]">
      <TitleBar />
      <div className="mx-1 flex min-h-0 flex-1 flex-col">
        <MenuBar />
        <MainToolbar />
        <LayerToolbar />
        <div className="flex min-h-0 flex-1 bg-white">
          <ToolPalette />
          <ArchMenu />
          <SideToolbar items={drawTools} />
          <DrawingArea />
          <SideToolbar items={modifyTools} />
        </div>
        <CommandPanel />
        <StatusBar />
      </div>
      <Watermark />
    </div>
  );
}
